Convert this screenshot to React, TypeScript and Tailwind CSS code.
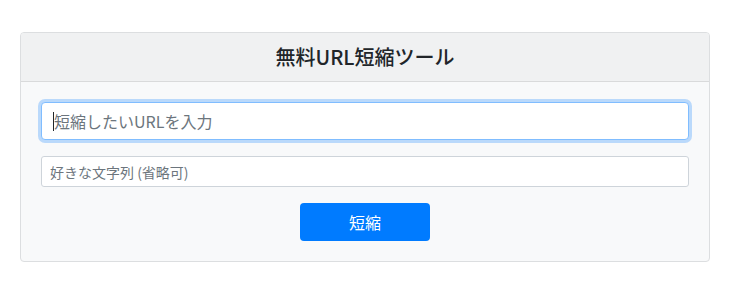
export default function App() {
  return (
    <div
      className="min-h-screen bg-white pt-[32px] px-[20px]"
      style={{ fontFamily: '"Noto Sans CJK JP", "Noto Sans", sans-serif' }}
    >
      <div className="w-[690px] rounded-[4px] border border-[#dcdee0] bg-[#f8f9fa] overflow-hidden">
        <div className="h-[49px] flex items-center justify-center border-b border-[#d9dadb] bg-[#f0f1f2]">
          <h1 className="text-[20px] leading-[24px] font-medium text-[#212529]">無料URL短縮ツール</h1>
        </div>
        <div className="p-[20px] flex flex-col gap-[16px]">
          <div className="relative">
            <input
              type="text"
              placeholder="短縮したいURLを入力"
              className="w-full h-[38px] rounded-[4px] border border-[#80bdff] bg-white px-[12px] text-[16px] text-[#495057] placeholder:text-[#6c757d] shadow-[0_0_0_3px_rgba(0,123,255,0.25)] outline-none"
            />
            <span className="absolute left-[12px] top-[10px] w-px h-[19px] bg-[#212529]" />
          </div>
          <input
            type="text"
            placeholder="好きな文字列 (省略可)"
            className="w-full h-[31px] rounded-[3px] border border-[#ced4da] bg-white px-[8px] text-[14px] text-[#495057] placeholder:text-[#6c757d] outline-none"
          />
          <div className="flex justify-center">
            <button className="w-[130px] h-[38px] rounded-[4px] bg-[#007bff] text-white text-[16px]">短縮</button>
          </div>
        </div>
      </div>
    </div>
  )
}
